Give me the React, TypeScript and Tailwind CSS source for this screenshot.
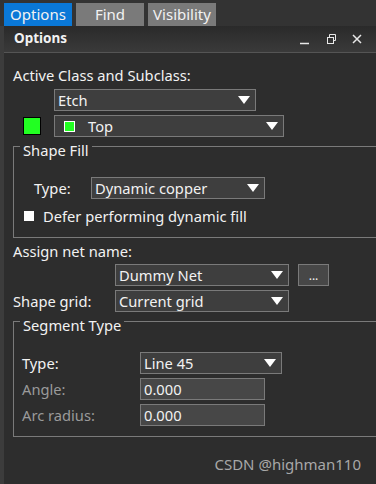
import React from "react";

const font = { fontFamily: '"Noto Sans", "Open Sans", sans-serif' };

function Caret() {
  return (
    <svg width="12" height="8" viewBox="0 0 12 8" className="shrink-0">
      <path d="M0 0 H12 L6 8 Z" fill="#ffffff" />
    </svg>
  );
}

function Select({
  value,
  width,
  children,
}: {
  value: string;
  width: string;
  children?: React.ReactNode;
}) {
  return (
    <div
      className={`flex h-[22px] ${width} items-center border border-[#7a7a7a] bg-[#3e3e3e] pl-[3px] pr-[5px] text-[#f2f2f2]`}
    >
      {children}
      <span className="flex-1 whitespace-nowrap leading-[20px]">{value}</span>
      <Caret />
    </div>
  );
}

function Field({ value }: { value: string }) {
  return (
    <div className="flex h-[22px] w-[125px] items-center border border-[#7a7a7a] bg-[#474747] pl-[3px] leading-[20px] text-[#f2f2f2]">
      {value}
    </div>
  );
}

export default function App() {
  return (
    <div
      className="h-[484px] w-[376px] overflow-hidden bg-[#2d2d2d] text-[14.7px] text-[#f2f2f2]"
      style={font}
    >
      {/* tab strip */}
      <div className="flex h-[26px] gap-[4px] bg-[#333333] pl-[4px] pt-[3px] text-[15px]">
        <div className="flex w-[68px] items-center justify-center bg-[#0a78d7] leading-none">
          Options
        </div>
        <div className="flex w-[68px] items-center justify-center bg-[#7a7a7a] leading-none">
          Find
        </div>
        <div className="flex w-[68px] items-center justify-center bg-[#7a7a7a] leading-none">
          Visibility
        </div>
      </div>

      <div className="flex h-[458px]">
        <div className="w-[4px] bg-[#3c3c3c]" />
        <div className="flex flex-1 flex-col">
          {/* title bar */}
          <div className="flex h-[27px] items-center border-b border-[#555555] bg-gradient-to-b from-[#2a2a2a] to-[#3a3a3a] pl-[10px] pr-[14px]">
            <span className="flex-1 text-[13.5px] font-bold leading-none">Options</span>
            <svg width="62" height="12" viewBox="0 0 62 12">
              <path d="M0 10.5 H9" stroke="#e8e8e8" strokeWidth="1.5" />
              <rect x="27.5" y="4.5" width="6" height="6" fill="none" stroke="#e8e8e8" />
              <path d="M29.5 4.5 V1.5 H35.5 V7.5 H33.5" fill="none" stroke="#e8e8e8" />
              <path d="M53 2 L61 10 M61 2 L53 10" stroke="#e8e8e8" strokeWidth="1.5" />
            </svg>
          </div>

          {/* body */}
          <div className="flex flex-col pl-[9px]">
            <div className="mt-[12px] leading-[20px]">Active Class and Subclass:</div>
            <div className="ml-[41px] mt-[4px]">
              <Select value="Etch" width="w-[202px]" />
            </div>
            <div className="mt-[4px] flex items-center">
              <div className="ml-[10px] h-[18px] w-[18px] border border-black bg-[#22ff22]" />
              <div className="ml-[13px]">
                <Select value="Top" width="w-[230px]">
                  <span className="ml-[6px] mr-[13px] h-[11px] w-[11px] shrink-0 border border-white bg-[#22ff22]" />
                </Select>
              </div>
            </div>

            <fieldset className="-mr-[4px] -mt-[4px] border border-r-0 border-[#7a7a7a] pb-[11px] pl-[20px]">
              <legend className="-ml-[14px] px-[3px] pt-[8px] leading-[18px]">Shape Fill</legend>
              <div className="mt-[18px] flex items-center">
                <span className="w-[57px] leading-[20px]">Type:</span>
                <Select value="Dynamic copper" width="w-[174px]" />
              </div>
              <div className="mt-[7px] flex items-center">
                <span className="-ml-[10px] h-[10px] w-[10px] bg-white" />
                <span className="ml-[9px] leading-[20px]">Defer performing dynamic fill</span>
              </div>
            </fieldset>

            <div className="mt-[3px] leading-[20px]">Assign net name:</div>
            <div className="ml-[102px] mt-[3px] flex items-center gap-[9px]">
              <Select value="Dummy Net" width="w-[174px]" />
              <div className="flex h-[22px] w-[31px] items-end justify-center border border-[#7a7a7a] bg-[#474747] pb-[3px] text-[12px] leading-none">
                ...
              </div>
            </div>
            <div className="mt-[4px] flex items-center">
              <span className="w-[102px] leading-[20px]">Shape grid:</span>
              <Select value="Current grid" width="w-[174px]" />
            </div>

            <fieldset className="-mr-[4px] -mt-[4px] border border-r-0 border-[#7a7a7a] pb-[10px] pl-[8px]">
              <legend className="-ml-[2px] px-[3px] pt-[8px] leading-[18px]">Segment Type</legend>
              <div className="mt-[18px] flex items-center">
                <span className="w-[118px] leading-[20px]">Type:</span>
                <Select value="Line 45" width="w-[142px]" />
              </div>
              <div className="mt-[4px] flex items-center">
                <span className="w-[118px] leading-[20px] text-[#9a9a9a]">Angle:</span>
                <Field value="0.000" />
              </div>
              <div className="mt-[4px] flex items-center">
                <span className="w-[118px] leading-[20px] text-[#9a9a9a]">Arc radius:</span>
                <Field value="0.000" />
              </div>
            </fieldset>

            <div className="mt-[20px] pr-[15px] text-right text-[15px] leading-none text-[#a8a8a8]">
              CSDN @highman110
            </div>
          </div>
        </div>
      </div>
    </div>
  );
}
